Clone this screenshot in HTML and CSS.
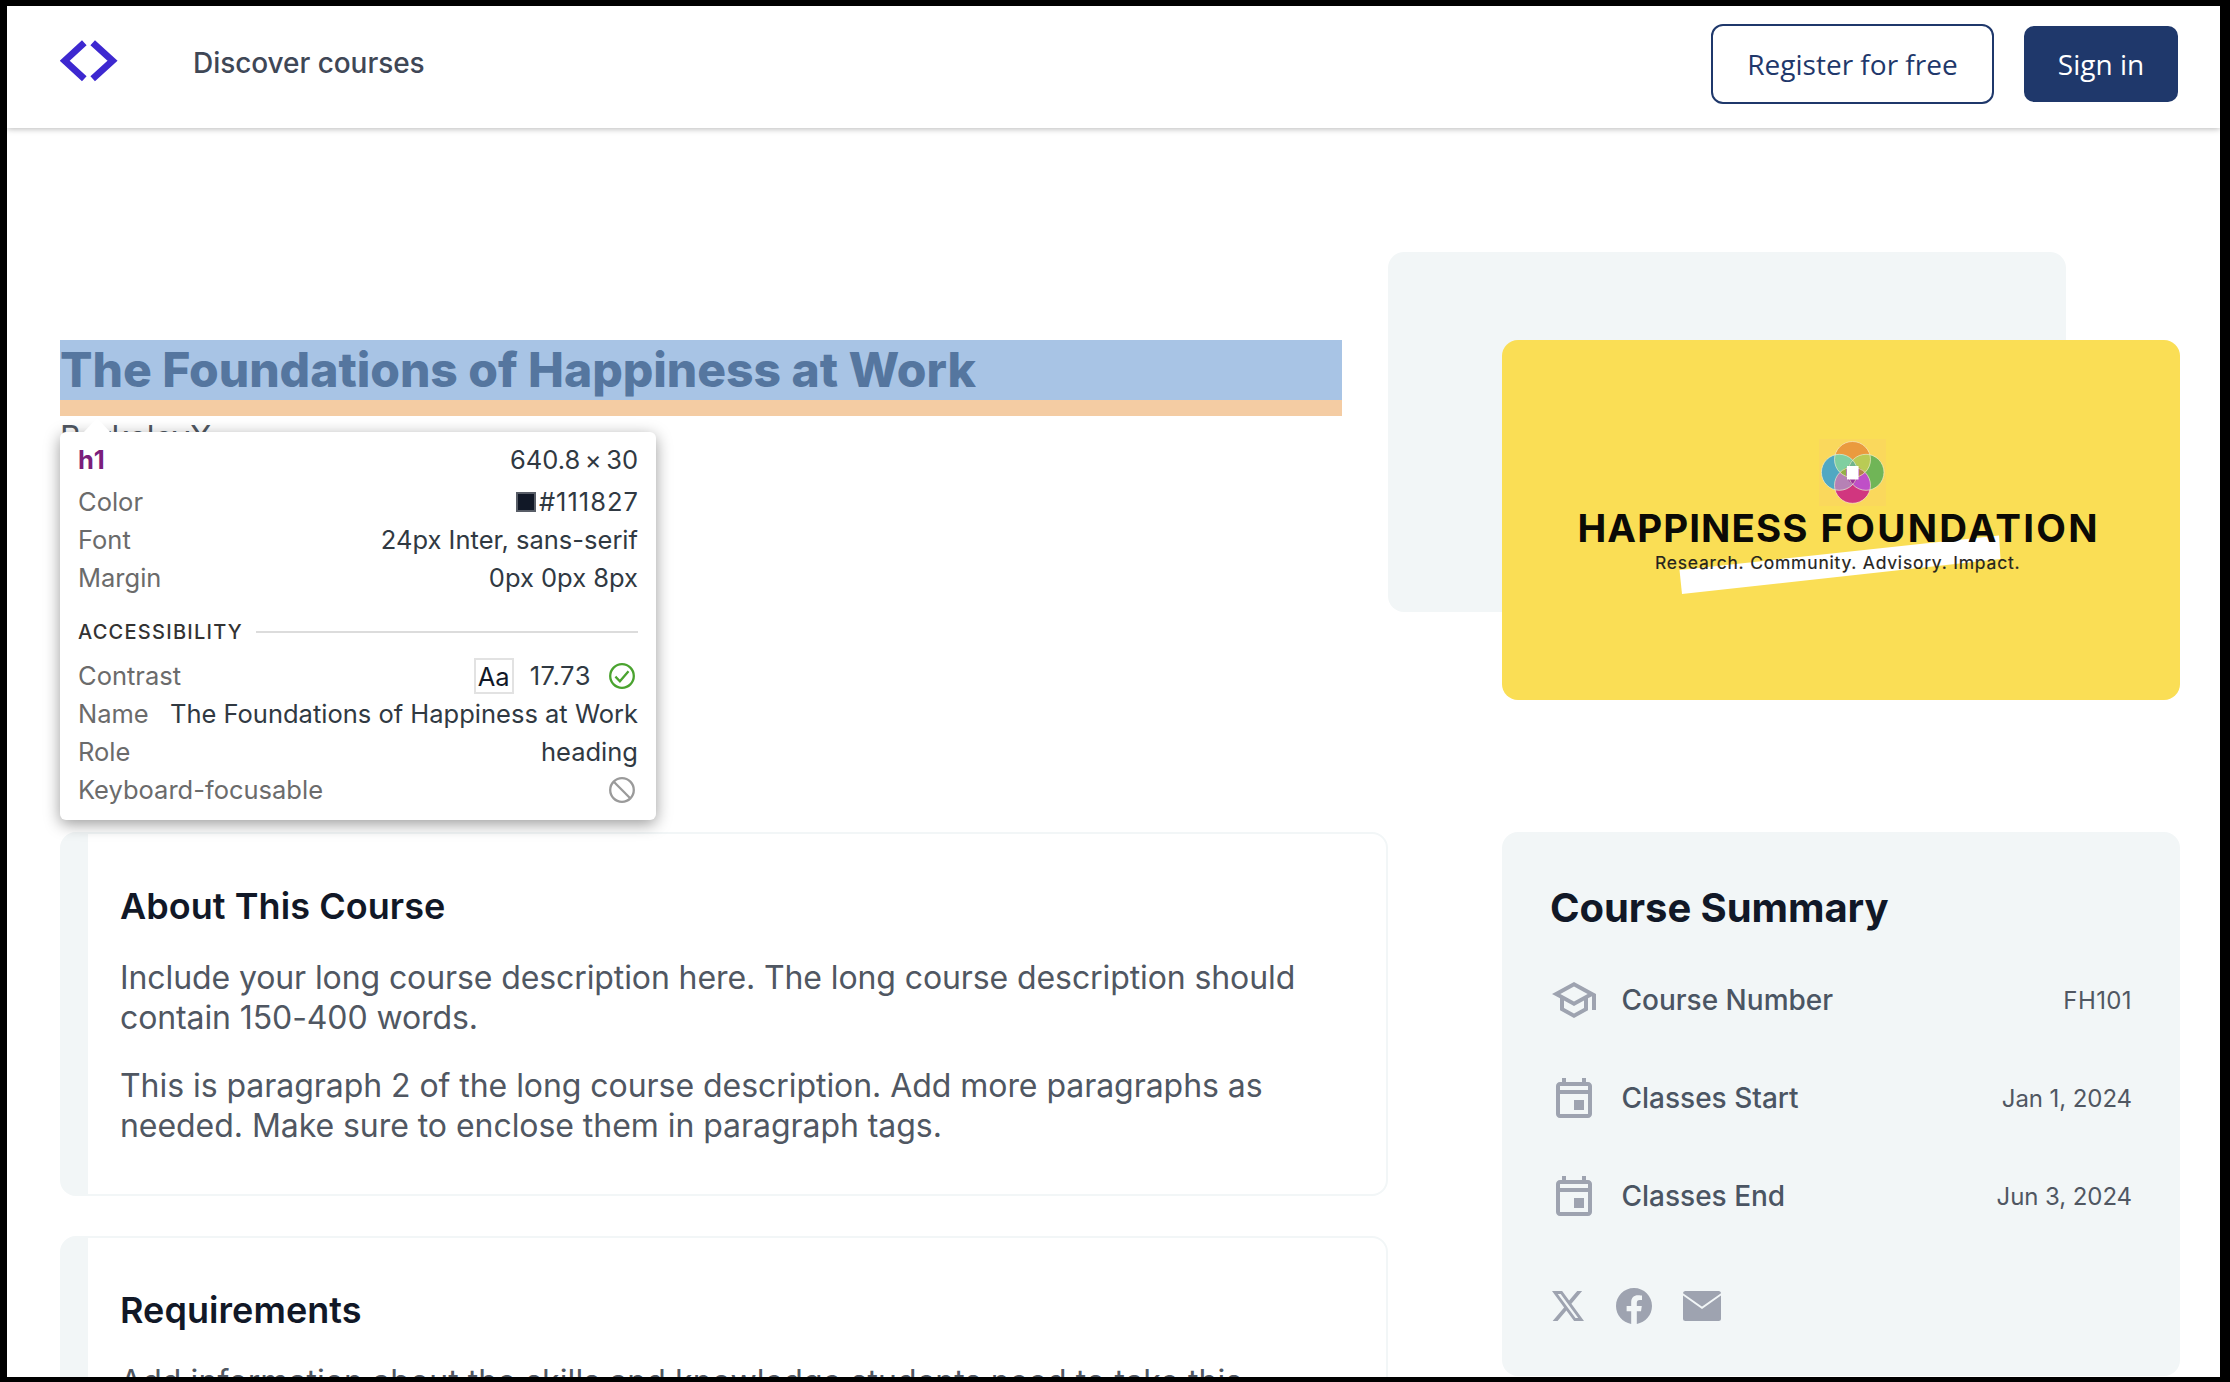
FILE: index.html
```html
<!DOCTYPE html>
<html lang="en">
<head>
<meta charset="utf-8">
<title>The Foundations of Happiness at Work</title>
<link rel="stylesheet" href="styles.css">
</head>
<body>
<div class="screen">
  <header class="header">
    <svg class="logo" viewBox="0 0 58 42" fill="none" stroke="#3d28d0" stroke-width="6.8"><path d="M24.300 2.800 4.700 20.800 24.300 38.800M32.700 2.800 52.500 20.800 32.700 38.800"/></svg>
    <a class="nav-link">Discover courses</a>
    <a class="btn btn-outline">Register for free</a>
    <a class="btn btn-solid">Sign in</a>
  </header>

  <main class="main">
    <section class="hero">
      <div class="hero-text">
        <h1 class="title">The Foundations of Happiness at Work</h1>
        <p class="org">BerkeleyX</p>
        <div class="tooltip">
          <svg class="arrow" viewBox="0 0 28 15"><path d="M14 0 28 15H0z" fill="#fff"/></svg>
          <div class="row row-tag"><b class="tag">h1</b><span class="size">640.8<i>×</i>30</span></div>
          <div class="row"><span class="key">Color</span><span class="swatch-value"><i class="swatch"></i>#111827</span></div>
          <div class="row"><span class="key">Font</span><span>24px Inter, sans-serif</span></div>
          <div class="row"><span class="key">Margin</span><span>0px 0px 8px</span></div>
          <div class="section"><span>ACCESSIBILITY</span></div>
          <div class="row"><span class="key">Contrast</span><span class="contrast"><span class="sample">Aa</span><span class="ratio">17.73</span>
            <svg class="status" viewBox="0 0 26 26" fill="none" stroke="#4aa32f" stroke-width="2.3"><circle cx="13" cy="13" r="11.8"/><path d="m6.4 13.6 4.5 4.6 8.6-10"/></svg></span></div>
          <div class="row"><span class="key">Name</span><span>The Foundations of Happiness at Work</span></div>
          <div class="row"><span class="key">Role</span><span>heading</span></div>
          <div class="row"><span class="key">Keyboard-focusable</span>
            <svg class="status" viewBox="0 0 26 26" fill="none" stroke="#9a9a9a" stroke-width="2.3"><circle cx="13" cy="13" r="11.8"/><path d="m4.8 4.8 16.4 16.4"/></svg></div>
        </div>
      </div>
      <div class="hero-media">
        <div class="backdrop"></div>
        <svg class="banner" viewBox="1502 340 678 360">
          <defs>
            <clipPath id="top"><circle cx="1852.5" cy="459.5" r="18"/></clipPath>
            <clipPath id="bottom"><circle cx="1852.5" cy="485.3" r="18"/></clipPath>
          </defs>
          <rect x="1502" y="340" width="678" height="360" fill="#fade55"/>
          <rect x="1819" y="439" width="67" height="67" fill="#fad85c"/>
          <circle cx="1852.5" cy="459.5" r="18" fill="#ea9a3e"/>
          <circle cx="1852.5" cy="485.3" r="18" fill="#d1367f"/>
          <circle cx="1839.4" cy="472.3" r="18" fill="#51a8c2"/>
          <circle cx="1866" cy="472.3" r="18" fill="#70b557"/>
          <g clip-path="url(#top)"><circle cx="1839.4" cy="472.3" r="18" fill="#80cfa0"/><circle cx="1866" cy="472.3" r="18" fill="#b9cb55"/></g>
          <g clip-path="url(#bottom)"><circle cx="1839.4" cy="472.3" r="18" fill="#b681b5"/><circle cx="1866" cy="472.3" r="18" fill="#bf4fc7"/></g>
          <path d="M1852.5 459.5l5 7h-10z" fill="#72b58c"/>
          <path d="M1840 472.3l6-5v10z" fill="#94b047"/>
          <path d="M1865 472.3l-6-5v10z" fill="#b3824a"/>
          <path d="M1852.5 485l5-6h-10z" fill="#9c3498"/>
          <g fill="none" stroke="#f6efd0" stroke-opacity=".65"><circle cx="1852.5" cy="459.5" r="18"/><circle cx="1852.5" cy="485.3" r="18"/><circle cx="1839.4" cy="472.3" r="18"/><circle cx="1866" cy="472.3" r="18"/></g>
          <rect x="1847" y="466" width="11.5" height="13.5" fill="#fff"/>
          <path d="M1679.5 570 1999 535.5 2000.5 559 1682 594z" fill="#fff"/>
          <g class="brand">
            <text x="1577.5" y="542" textLength="230" lengthAdjust="spacing">HAPPINESS</text>
            <text x="1820.5" y="542" textLength="277" lengthAdjust="spacing">FOUNDATION</text>
          </g>
          <text class="tagline" x="1655" y="569" textLength="364.5" lengthAdjust="spacing">Research. Community. Advisory. Impact.</text>
        </svg>
      </div>
    </section>

    <section class="content">
      <div class="cards">
        <article class="card">
          <h2 class="card-title">About This Course</h2>
          <p class="para para-tight">Include your long course description here. The long course description should contain 150-400 words.</p>
          <p class="para">This is paragraph 2 of the long course description. Add more paragraphs as needed. Make sure to enclose them in paragraph tags.</p>
        </article>
        <article class="card">
          <h2 class="card-title">Requirements</h2>
          <p class="para para-wide">Add information about the skills and knowledge students need to take this</p>
        </article>
      </div>
      <aside class="summary">
        <h2 class="summary-title">Course Summary</h2>
        <div class="fact">
          <svg class="fact-icon" viewBox="0 0 24 24"><path d="M12 3 1 9l4 2.180v6L12 21l7-3.820v-6l2-1.090V17h2V9L12 3zm6.820 6L12 12.720 5.180 9 12 5.280 18.820 9zM17 15.990l-5 2.730-5-2.730v-3.720L12 15l5-2.730v3.720z"/></svg>
          <span class="fact-name">Course Number</span><span class="fact-value code">FH101</span>
        </div>
        <div class="fact">
          <svg class="fact-icon" viewBox="0 -1 24 24"><path d="M19 3h-1V1h-2v2H8V1H6v2H5c-1.110 0-2 .9-2 2v14c0 1.100.890 2 2 2h14c1.100 0 2-.9 2-2V5c0-1.100-.9-2-2-2zm0 16H5V9h14v10zm0-12H5V5h14v2zM12 12h5v5h-5z"/></svg>
          <span class="fact-name">Classes Start</span><span class="fact-value">Jan 1, 2024</span>
        </div>
        <div class="fact">
          <svg class="fact-icon" viewBox="0 -1 24 24"><path d="M19 3h-1V1h-2v2H8V1H6v2H5c-1.110 0-2 .9-2 2v14c0 1.100.890 2 2 2h14c1.100 0 2-.9 2-2V5c0-1.100-.9-2-2-2zm0 16H5V9h14v10zm0-12H5V5h14v2zM12 12h5v5h-5z"/></svg>
          <span class="fact-name">Classes End</span><span class="fact-value">Jun 3, 2024</span>
        </div>
        <div class="social">
          <svg width="32" height="30" viewBox="1.25 2.25 21.58 19.5" preserveAspectRatio="none"><path d="M18.244 2.250h3.308l-7.227 8.260 8.502 11.240H16.170l-5.214-6.817L4.990 21.750H1.680l7.730-8.835L1.254 2.250H8.080l4.713 6.231zm-1.161 17.520h1.833L7.084 4.126H5.117z"/></svg>
          <svg width="36" height="36" viewBox="0 0 24 24"><path d="M24 12.073c0-6.627-5.373-12-12-12s-12 5.373-12 12c0 5.990 4.388 10.954 10.125 11.854v-8.385H7.078v-3.470h3.047V9.430c0-3.007 1.792-4.669 4.533-4.669 1.312 0 2.686.235 2.686.235v2.953H15.830c-1.491 0-1.956.925-1.956 1.874v2.250h3.328l-.532 3.470h-2.796v8.385C19.612 23.027 24 18.062 24 12.073z"/></svg>
          <svg width="38" height="30" viewBox="0 0 38 30"><rect width="38" height="30" rx="2.5"/><path d="M-1 2.700 19 16.800 39 2.700" fill="none" stroke="#f2f6f7" stroke-width="1.9"/></svg>
        </div>
      </aside>
    </section>
  </main>
</div>
</body>
</html>
```
FILE: styles.css
```css
* { box-sizing: border-box; }
html { background: #000; }
body { margin: 0; padding: 6px 10px 5px 7px; font-family: Inter, sans-serif; overflow: hidden; }
h1, h2, p { margin: 0; }
svg { display: block; flex: none; }
.screen { height: 1371px; background: #fff; overflow: hidden; }

.header { display: flex; align-items: center; height: 122px; padding: 0 42px 6px 53px; box-shadow: 0 1px 6px rgba(0, 0, 0, .28); }
.logo { width: 58px; height: 42px; margin-bottom: 6px; }
.nav-link { margin: 0 auto 3px 75px; font-size: 28px; font-weight: 500; line-height: 34px; letter-spacing: -.06px; color: #3f4756; }
.btn { display: flex; align-items: center; justify-content: center; font: 400 28px/38px "Open Sans", sans-serif; }
.btn-outline { width: 283px; height: 80px; margin-right: 30px; border: 2px solid #1f386b; border-radius: 12px; color: #1f386b; }
.btn-solid { width: 154px; height: 76px; border-radius: 10px; background: #1f386b; color: #fff; }

.main { padding: 124px 40px 0 53px; }
.hero { display: grid; grid-template-columns: 1328px 792px; height: 580px; }
.hero-text { position: relative; padding-top: 88px; }
.title { width: 1282px; height: 76px; border-bottom: 16px solid #f4cca3; background: #a8c4e5; font-size: 48px; font-weight: 800; line-height: 60px; letter-spacing: -.04px; color: #55769f; }
.org { margin-top: 2px; font-size: 32px; line-height: 40px; color: #505761; letter-spacing: -.2px; }

.tooltip { position: absolute; left: 0; top: 180px; width: 596px; height: 388px; padding: 9px 18px 11px; border-radius: 6px; background: #fff; box-shadow: 0 4px 16px rgba(0, 0, 0, .4); font-size: 25.5px; line-height: 38px; color: #303942; }
.arrow { position: absolute; left: 23px; top: -14px; width: 28px; height: 15px; }
.row { display: flex; align-items: center; justify-content: space-between; height: 38px; white-space: nowrap; }
.row-tag { margin-bottom: 4px; }
.tag { color: #7b1e7b; letter-spacing: .8px; }
.size i { margin: 0 4.5px; font-style: normal; }
.key { color: #6b6b6b; }
.swatch-value { display: flex; align-items: center; gap: 3px; letter-spacing: 1px; margin-right: -1px; }
.swatch { width: 20px; height: 20px; border: 2px solid #585d67; background: #111827; }
.section { display: flex; align-items: center; gap: 13px; margin: 23px 0 13px; font-size: 20px; font-weight: 500; line-height: 24px; letter-spacing: 1.25px; color: #333; }
.section::after { content: ""; flex: 1; height: 2px; background: #dcdcdc; }
.contrast { display: flex; align-items: center; }
.sample { width: 40px; height: 36px; margin-right: 16px; border: 2px solid #e2e2e2; line-height: 33px; text-align: center; color: #111827; }
.ratio { margin-right: 18px; letter-spacing: .6px; }
.status { width: 26px; height: 26px; margin-right: 3px; }

.hero-media { position: relative; }
.backdrop { width: 678px; height: 360px; border-radius: 16px; background: #f2f6f7; }
.banner { position: absolute; left: 114px; top: 88px; width: 678px; height: 360px; border-radius: 16px; }
.brand { font: 700 38.5px Inter, sans-serif; fill: #0b0a06; }
.tagline { font: 400 17.5px Inter, sans-serif; fill: #25231c; stroke: #25231c; stroke-width: .2px; }

.content { display: grid; grid-template-columns: 1328px 678px; gap: 114px; }
.cards { display: flex; flex-direction: column; gap: 40px; }
.card { height: 364px; padding: 50px 48px 48px 32px; border: 2px solid #f2f6f7; border-left-width: 28px; border-radius: 16px; }
.card-title { margin-bottom: 30px; font-size: 36px; font-weight: 600; line-height: 44px; letter-spacing: .06px; color: #111827; }
.para { margin-bottom: 28px; font-size: 32px; line-height: 40px; letter-spacing: -.05px; color: #505762; }
.para-tight { letter-spacing: -.1px; }
.para-wide { letter-spacing: .08px; }

.summary { height: 544px; padding: 52px 48px 0; border-radius: 16px; background: #f2f6f7; }
.summary-title { margin-bottom: 44px; font-size: 40px; font-weight: 700; line-height: 48px; letter-spacing: -.06px; color: #111827; }
.fact { display: flex; align-items: center; height: 48px; margin-bottom: 50px; }
.fact-icon { width: 48px; height: 48px; margin-right: 23.5px; fill: #9ea3b0; }
.fact-name { flex: 1; font-size: 28px; font-weight: 500; color: #4b5563; }
.fact-value { font-size: 24px; letter-spacing: -.08px; color: #505762; }
.code { letter-spacing: .4px; }
.social { display: flex; align-items: center; height: 40px; margin: 66px 0 0 2px; fill: #9ea3b0; gap: 31.5px; }
```
